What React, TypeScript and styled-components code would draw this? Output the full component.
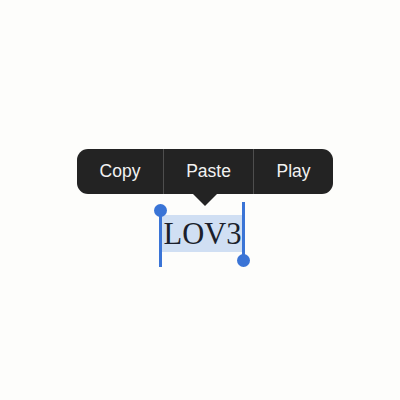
import styled, { createGlobalStyle } from 'styled-components';

const Global = createGlobalStyle`
  html, body {
    margin: 0;
    background: #fdfdfb;
  }
`;

const Stage = styled.div`
  width: 400px;
  height: 400px;
  box-sizing: border-box;
  padding: 149px 0 0 77px;
  display: flex;
  flex-direction: column;
  align-items: flex-start;
`;

const Menu = styled.div`
  position: relative;
  display: flex;
  height: 45px;
  background: #232323;
  border-radius: 11px;
`;

const Item = styled.div<{ $w: number }>`
  width: ${p => p.$w}px;
  display: flex;
  align-items: center;
  justify-content: center;
  color: #f2f2f2;
  font-family: "Liberation Sans", Arial, sans-serif;
  font-size: 17.5px;
  & + & {
    border-left: 1px solid #4e4e4e;
  }
`;

const Arrow = styled.div`
  position: absolute;
  left: 116px;
  top: 45px;
  width: 0;
  height: 0;
  border-left: 12px solid transparent;
  border-right: 12px solid transparent;
  border-top: 12px solid #232323;
`;

const Selection = styled.div`
  position: relative;
  margin: 21px 0 0 85px;
  width: 81px;
  height: 37px;
  background: #d0dff3;
  display: flex;
  align-items: center;
  justify-content: center;
  color: #1b1f2c;
  font-family: "Liberation Serif", "Times New Roman", serif;
  font-size: 30.5px;
  line-height: 1;
  padding-top: 2px;
  box-sizing: border-box;
`;

const Bar = styled.div<{ $side: 'start' | 'end' }>`
  position: absolute;
  width: 3px;
  background: #3a74d6;
  ${p => p.$side === 'start'
    ? 'left: -3px; top: -5px; height: 57px;'
    : 'right: -2px; top: -13px; height: 59px;'}
`;

const Knob = styled.div<{ $side: 'start' | 'end' }>`
  position: absolute;
  width: 13px;
  height: 13px;
  border-radius: 50%;
  background: #3a74d6;
  left: -5px;
  ${p => p.$side === 'start' ? 'top: -6px;' : 'bottom: -6px;'}
`;

export default function App() {
  return (
    <>
      <Global />
      <Stage>
        <Menu>
          <Item $w={86}>Copy</Item>
          <Item $w={89}>Paste</Item>
          <Item $w={79}>Play</Item>
          <Arrow />
        </Menu>
        <Selection>
          LOV3
          <Bar $side="start"><Knob $side="start" /></Bar>
          <Bar $side="end"><Knob $side="end" /></Bar>
        </Selection>
      </Stage>
    </>
  );
}
